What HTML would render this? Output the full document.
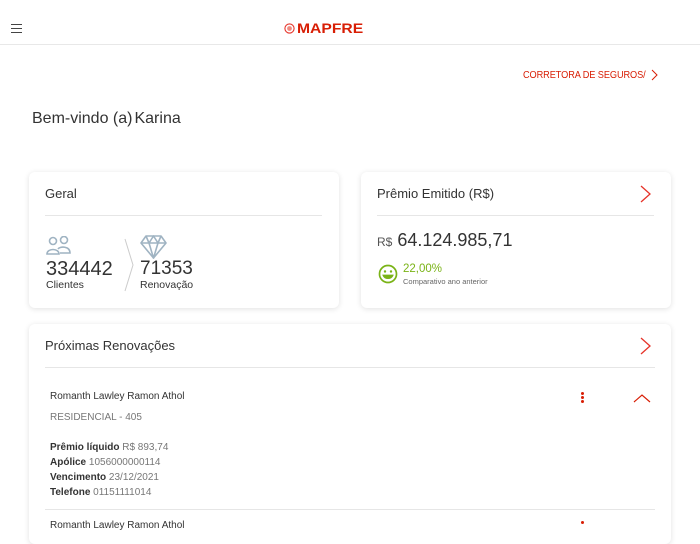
<!DOCTYPE html>
<html><head><meta charset="utf-8"><style>
*{margin:0;padding:0;box-sizing:border-box}
body{width:700px;height:525px;overflow:hidden;background:#fff;font-family:"Liberation Sans",sans-serif;color:#333;position:relative}
.abs{position:absolute}
.card{position:absolute;background:#fff;border-radius:6px;box-shadow:0 1px 6px rgba(0,0,0,0.12)}
.hr{position:absolute;height:1px;background:#e6e6e6}
.t{position:absolute;white-space:nowrap}
</style></head><body>
<div class="abs" style="left:0;top:44px;width:700px;height:1px;background:#e8e8e8"></div>
<div class="abs" style="left:11px;top:23.5px;width:11px;height:1.7px;background:#444;box-shadow:0 4px 0 #444,0 8px 0 #444"></div>
<svg class="abs" style="left:284px;top:23px" width="11" height="11" viewBox="0 0 11 11"><circle cx="5.5" cy="5.5" r="4.6" fill="none" stroke="#e63329" stroke-width="1.1"/><circle cx="5.5" cy="5.5" r="2.4" fill="#f08a80"/></svg>
<div class="t" style="left:297px;top:20px;font-size:14px;font-weight:bold;color:#d81e05;transform:scaleX(1.12);transform-origin:left">MAPFRE</div>
<div class="t" style="left:523px;top:70px;font-size:10px;color:#d81e05;letter-spacing:-0.1px;transform:scaleX(0.92);transform-origin:left">CORRETORA DE SEGUROS/</div>
<svg class="abs" style="left:651px;top:69px" width="8" height="12"><path d="M1 1l5 5-5 5" fill="none" stroke="#d81e05" stroke-width="1"/></svg>
<div class="t" style="left:32px;top:110px;font-size:16px;color:#333">Bem-vindo (a)<span style="margin-left:2px">Karina</span></div>

<div class="card" style="left:29px;top:172px;width:310px;height:136px">
 <div class="t" style="left:16px;top:14px;font-size:13px">Geral</div>
 <div class="hr" style="left:16px;top:43px;width:277px"></div>
 <svg class="abs" style="left:17px;top:64px" width="26" height="20" viewBox="0 0 26 20"><g fill="none" stroke="#9fb3c2" stroke-width="1.6"><circle cx="7" cy="5" r="3.5"/><circle cx="18" cy="4" r="3.5"/><path d="M1 18c0-6 12-6 12 0z"/><path d="M12 13c2-3 12-3 12 4h-10"/></g></svg>
 <div class="t" style="left:17px;top:86px;font-size:20px;color:#333">334442</div>
 <div class="t" style="left:17px;top:107px;font-size:10.5px;color:#333">Clientes</div>
 <svg class="abs" style="left:94px;top:66px" width="12" height="54"><path d="M2 1l8 26-8 26" fill="none" stroke="#ccc" stroke-width="1"/></svg>
 <svg class="abs" style="left:111px;top:63px" width="27" height="24" viewBox="0 0 27 24"><g fill="none" stroke="#9fb3c2" stroke-width="1.6" stroke-linejoin="round"><path d="M6 1h15l5 7-12.5 15L1 8z"/><path d="M1 8h25M9 8l4.5 15L18 8M6 1l3 7 4.5-7 4.5 7 3-7"/></g></svg>
 <div class="t" style="left:111px;top:86px;font-size:19px;color:#333">71353</div>
 <div class="t" style="left:111px;top:107px;font-size:10.5px;color:#333">Renovação</div>
</div>

<div class="card" style="left:361px;top:172px;width:310px;height:136px">
 <div class="t" style="left:16px;top:14px;font-size:13px">Prêmio Emitido (R$)</div>
 <svg class="abs" style="left:279px;top:13px" width="12" height="18"><path d="M1 1l9 8-9 8" fill="none" stroke="#e63329" stroke-width="1.3"/></svg>
 <div class="hr" style="left:16px;top:43px;width:277px"></div>
 <div class="t" style="left:16px;top:58px;font-size:18px;color:#333"><span style="font-size:12px;color:#555">R$</span> 64.124.985,71</div>
 <svg class="abs" style="left:17px;top:92px" width="20" height="20" viewBox="0 0 20 20"><g fill="none" stroke="#7ab317" stroke-width="1.7"><circle cx="10" cy="10" r="8.5"/><path d="M5.5 11.5c1.5 3.5 7.5 3.5 9 0z" fill="#7ab317"/></g><circle cx="7" cy="7.5" r="1.2" fill="#7ab317"/><circle cx="13" cy="7.5" r="1.2" fill="#7ab317"/></svg>
 <div class="t" style="left:42px;top:91px;font-size:11.5px;color:#7ab317">22,00%</div>
 <div class="t" style="left:42px;top:105px;font-size:7.5px;color:#666">Comparativo ano anterior</div>
</div>

<div class="card" style="left:29px;top:324px;width:642px;height:220px">
 <div class="t" style="left:16px;top:14px;font-size:13px">Próximas Renovações</div>
 <svg class="abs" style="left:611px;top:13px" width="12" height="18"><path d="M1 1l9 8-9 8" fill="none" stroke="#e63329" stroke-width="1.3"/></svg>
 <div class="hr" style="left:16px;top:43px;width:610px"></div>
 <div class="t" style="left:21px;top:67px;font-size:10px;color:#333">Romanth Lawley Ramon Athol</div>
 <div class="abs" style="left:552px;top:68px;width:3px;height:3px;border-radius:50%;background:#d81e05;box-shadow:0 4px 0 #d81e05,0 8px 0 #d81e05"></div>
 <svg class="abs" style="left:604px;top:69px" width="18" height="10"><path d="M1 9l8-7 8 7" fill="none" stroke="#d81e05" stroke-width="1.2"/></svg>
 <div class="t" style="left:21px;top:88px;font-size:10px;color:#777">RESIDENCIAL - 405</div>
 <div class="t" style="left:21px;top:118px;font-size:10px;color:#777"><b style="color:#333">Prêmio líquido</b> R$ 893,74</div>
 <div class="t" style="left:21px;top:133px;font-size:10px;color:#777"><b style="color:#333">Apólice</b> 1056000000114</div>
 <div class="t" style="left:21px;top:148px;font-size:10px;color:#777"><b style="color:#333">Vencimento</b> 23/12/2021</div>
 <div class="t" style="left:21px;top:163px;font-size:10px;color:#777"><b style="color:#333">Telefone</b> 01151111014</div>
 <div class="hr" style="left:16px;top:185px;width:610px"></div>
 <div class="t" style="left:21px;top:196px;font-size:10px;color:#333">Romanth Lawley Ramon Athol</div>
 <div class="abs" style="left:552px;top:197px;width:3px;height:3px;border-radius:50%;background:#d81e05"></div>
</div>
</body></html>
